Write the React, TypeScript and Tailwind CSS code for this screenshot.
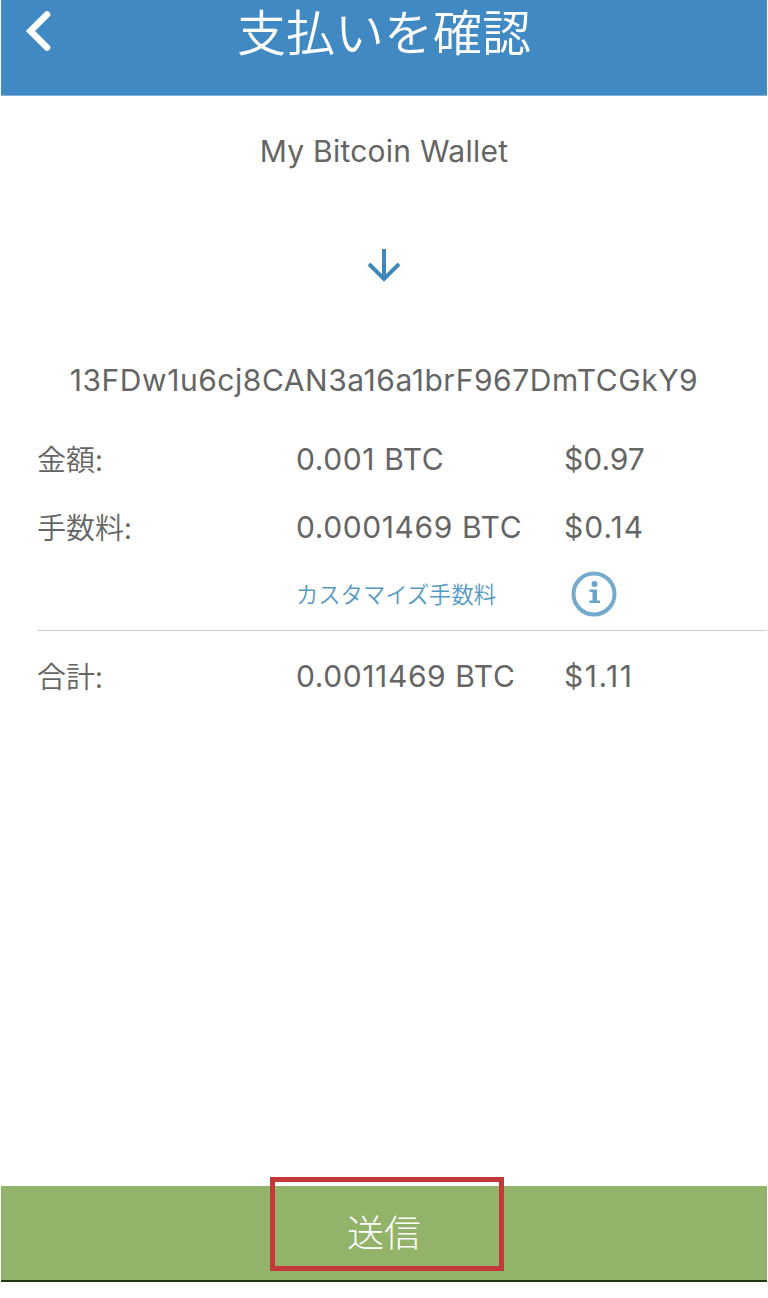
const Latin = "font-['Inter','Noto_Sans_CJK_JP',sans-serif]";
const Japanese = "font-['Noto_Sans_CJK_JP',sans-serif]";

type AmountRowProps = {
  label: string;
  btc: string;
  usd: string;
  usdTracking?: string;
};

const AmountRow = ({ label, btc, usd, usdTracking = "tracking-normal" }: AmountRowProps) => {
  return (
    <div className="flex h-[68px] items-center whitespace-nowrap">
      <div className={`w-[259px] pb-[4px] text-[29px] font-[350] ${Japanese}`}>{label}</div>
      <div className="w-[268px] pb-[2px] tracking-[0.6px]">{btc}</div>
      <div className={`pb-[2px] ${usdTracking}`}>{usd}</div>
    </div>
  );
}

const Header = () => {
  return (
    <header className="relative flex h-[96px] justify-center border-b border-[#85b2d8] bg-[#4189c3] text-white">
      <svg className="absolute left-[22px] top-[9px]" width="30" height="44" viewBox="0 0 30 44" fill="none" stroke="currentColor" strokeWidth="6.600" strokeLinecap="round">
        <path d="M24 5.500L7.500 22L24 38.500" strokeLinejoin="miter" />
      </svg>
      <h1 className={`h-[60px] text-[49px] font-[350] leading-[59px] ${Japanese}`}>支払いを確認</h1>
    </header>
  );
}

const InfoIcon = () => {
  return (
    <svg className="mb-[5px]" width="46" height="46" viewBox="0 0 46 46" fill="none">
      <circle cx="23" cy="23" r="20.500" stroke="#73aacd" strokeWidth="4" />
      <circle cx="23.500" cy="13" r="3" fill="#6ba4c9" />
      <path d="M18.500 18.500H26V29.500H29V32H18.500V29.500H21.500V21H18.500Z" fill="#6ba4c9" />
    </svg>
  );
}

const App = () => {
  return (
    <div className={`flex h-[1298px] w-[768px] flex-col bg-white px-px text-[30px] leading-[40px] text-[#656565] ${Latin}`}>
      <Header />
      <main className="flex grow flex-col">
        <div className="mt-[35px] text-center tracking-[0.25px]">My Bitcoin Wallet</div>
        <div className="mt-[73px] flex h-[40px] justify-center">
          <svg width="34" height="40" viewBox="0 0 34 40" fill="none" stroke="#4387b8" strokeWidth="4">
            <path d="M17 5V34M2 20L17 35L32 20" />
          </svg>
        </div>
        <div className="mt-[76px] text-center tracking-[0.550px]">13FDw1u6cj8CAN3a16a1brF967DmTCGkY9</div>
        <div className="ml-[36px] mt-[26px]">
          <AmountRow label="金額:" btc="0.001 BTC" usd="$0.97" />
          <AmountRow label="手数料:" btc="0.0001469 BTC" usd="$0.14" usdTracking="tracking-[1px]" />
          <div className="flex h-[68px] items-center pl-[259px]">
            <a className={`w-[275px] pb-[6px] text-[22.3px] font-[350] text-[#559ac5] ${Japanese}`}>カスタマイズ手数料</a>
            <InfoIcon />
          </div>
          <div className="h-px bg-[#cfcfcf]" />
          <div className="mt-[12px]">
            <AmountRow label="合計:" btc="0.0011469 BTC" usd="$1.11" usdTracking="tracking-[1.500px]" />
          </div>
        </div>
      </main>
      <footer className="relative mb-[16px] flex h-[96px] shrink-0 justify-center border-b-2 border-[#203a10] bg-[#93b36b]">
        <button className={`pb-[4px] text-[37px] font-light text-white ${Japanese}`}>送信</button>
        <div className="absolute left-[269px] top-[-9px] h-[94px] w-[234px] border-[5px] border-[#c4383a]" />
      </footer>
    </div>
  );
}

export default App;
